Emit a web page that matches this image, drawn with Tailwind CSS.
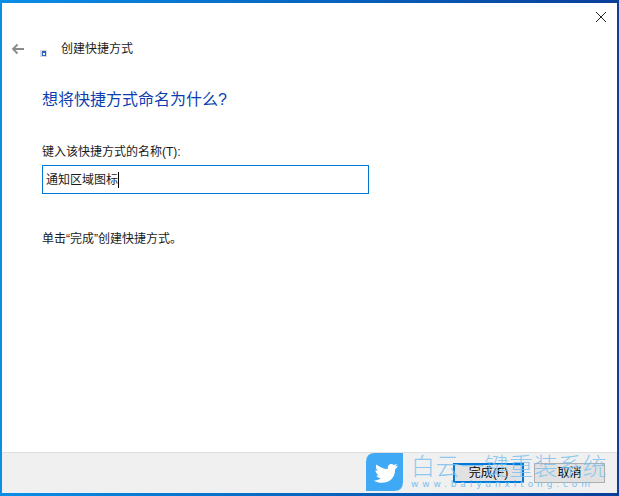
<!DOCTYPE html>
<html><head><meta charset="utf-8"><script src="https://cdn.jsdelivr.net/npm/@tailwindcss/browser@4"></script></head>
<body class="m-0 overflow-hidden bg-white">
<div class="relative w-[619px] h-[496px] pt-[3px] pl-[2px] pr-[2px] pb-[3px] bg-gradient-to-r from-[#0a8ee8] to-[#0a3f9a] font-['Liberation_Sans','Noto_Sans_CJK_SC',sans-serif] text-[12px] text-[#1a1a1a]">
  <div class="flex flex-col h-full bg-white">
    <div class="flex-1 relative flex flex-col">
      <div class="flex justify-end pt-[8px] pr-[10px] h-[28px]">
        <svg width="12" height="12" viewBox="0 0 12 12" fill="none" stroke="#222" stroke-width="1"><path d="M1 1L11 11M11 1L1 11"/></svg>
      </div>
      <div class="flex items-center h-[36px] pl-[9px]">
        <svg width="14" height="12" viewBox="0 0 14 12" fill="none" stroke="#8a8a8a" stroke-width="1.8"><path d="M13 6H2M6.500 1.500L2 6l4.500 4.500"/></svg>
        <svg class="ml-[15px] mt-[9px]" width="7" height="7" viewBox="0 0 7 7"><rect width="7" height="7" fill="#d5dbe6"/><rect x="2" y="1" width="4" height="5" fill="#2a62b8"/><rect x="3" y="3" width="2" height="2" fill="#fff"/></svg>
        <span class="ml-[14px] leading-[16px]">创建快捷方式</span>
      </div>
      <h1 class="ml-[40px] mt-[22px] text-[16px] leading-[22px] font-normal text-[#0b3fb0]">想将快捷方式命名为什么?</h1>
      <label class="ml-[40px] mt-[33px] leading-[16px]">键入该快捷方式的名称(T):</label>
      <div class="ml-[40px] mt-[5px] w-[327px] h-[29px] border border-[#0078d7] flex items-center pl-[3px] leading-[16px]">
        <span>通知区域图标</span><span class="w-px h-[16px] bg-black"></span>
      </div>
      <p class="ml-[40px] mt-[37px] leading-[16px]">单击“完成”创建快捷方式。</p>
    </div>
    <div class="h-[41px] flex items-center justify-end gap-[10px] pr-[12px] bg-[#f0f0f0] border-t border-[#dfdfdf]">
      <div class="w-[71px] h-[20px] border-2 border-[#0078d7] bg-[#e1e1e1] flex items-center justify-center text-black">完成(F)</div>
      <div class="w-[71px] h-[20px] border border-[#adadad] bg-[#e1e1e1] flex items-center justify-center text-black">取消</div>
    </div>
  </div>
  <div class="absolute left-[366px] top-[453px] flex gap-[7px]">
    <svg width="38" height="38" viewBox="0 0 38 38"><path d="M9 0H37V29Q37 38 28 38H0V9Q0 0 9 0Z" fill="#3fa9f5"/><g transform="translate(4 3.500) scale(.9)"><path d="M31 10q-2 1-3.500 1 2-1 2.500-3-2 1-3.500 1.500C24 7 19 8.500 20 14 15 14 11 12 7 9c-1 3 0 6 2 7l-3-1c0 3 2 5 4 6l-3 0c1 2 3 3 5 3-2 2-5 3-8 3 10 5 24 2 24-13q2-1 3-4Z" fill="#fff"/></g></svg>
    <div class="flex flex-col -mt-[2px]">
      <span class="text-[24px] leading-[28px] tracking-[0.5px] whitespace-nowrap text-[#7cc0ee]/85 font-['Noto_Sans_CJK_SC',sans-serif] font-light">白云一键重装系统</span>
      <span class="text-[9px] leading-[10px] tracking-[3.9px] whitespace-nowrap text-[#7cc0ee] font-['DejaVu_Sans',sans-serif]">www.baiyunxitong.com</span>
    </div>
  </div>
</div>
</body></html>
